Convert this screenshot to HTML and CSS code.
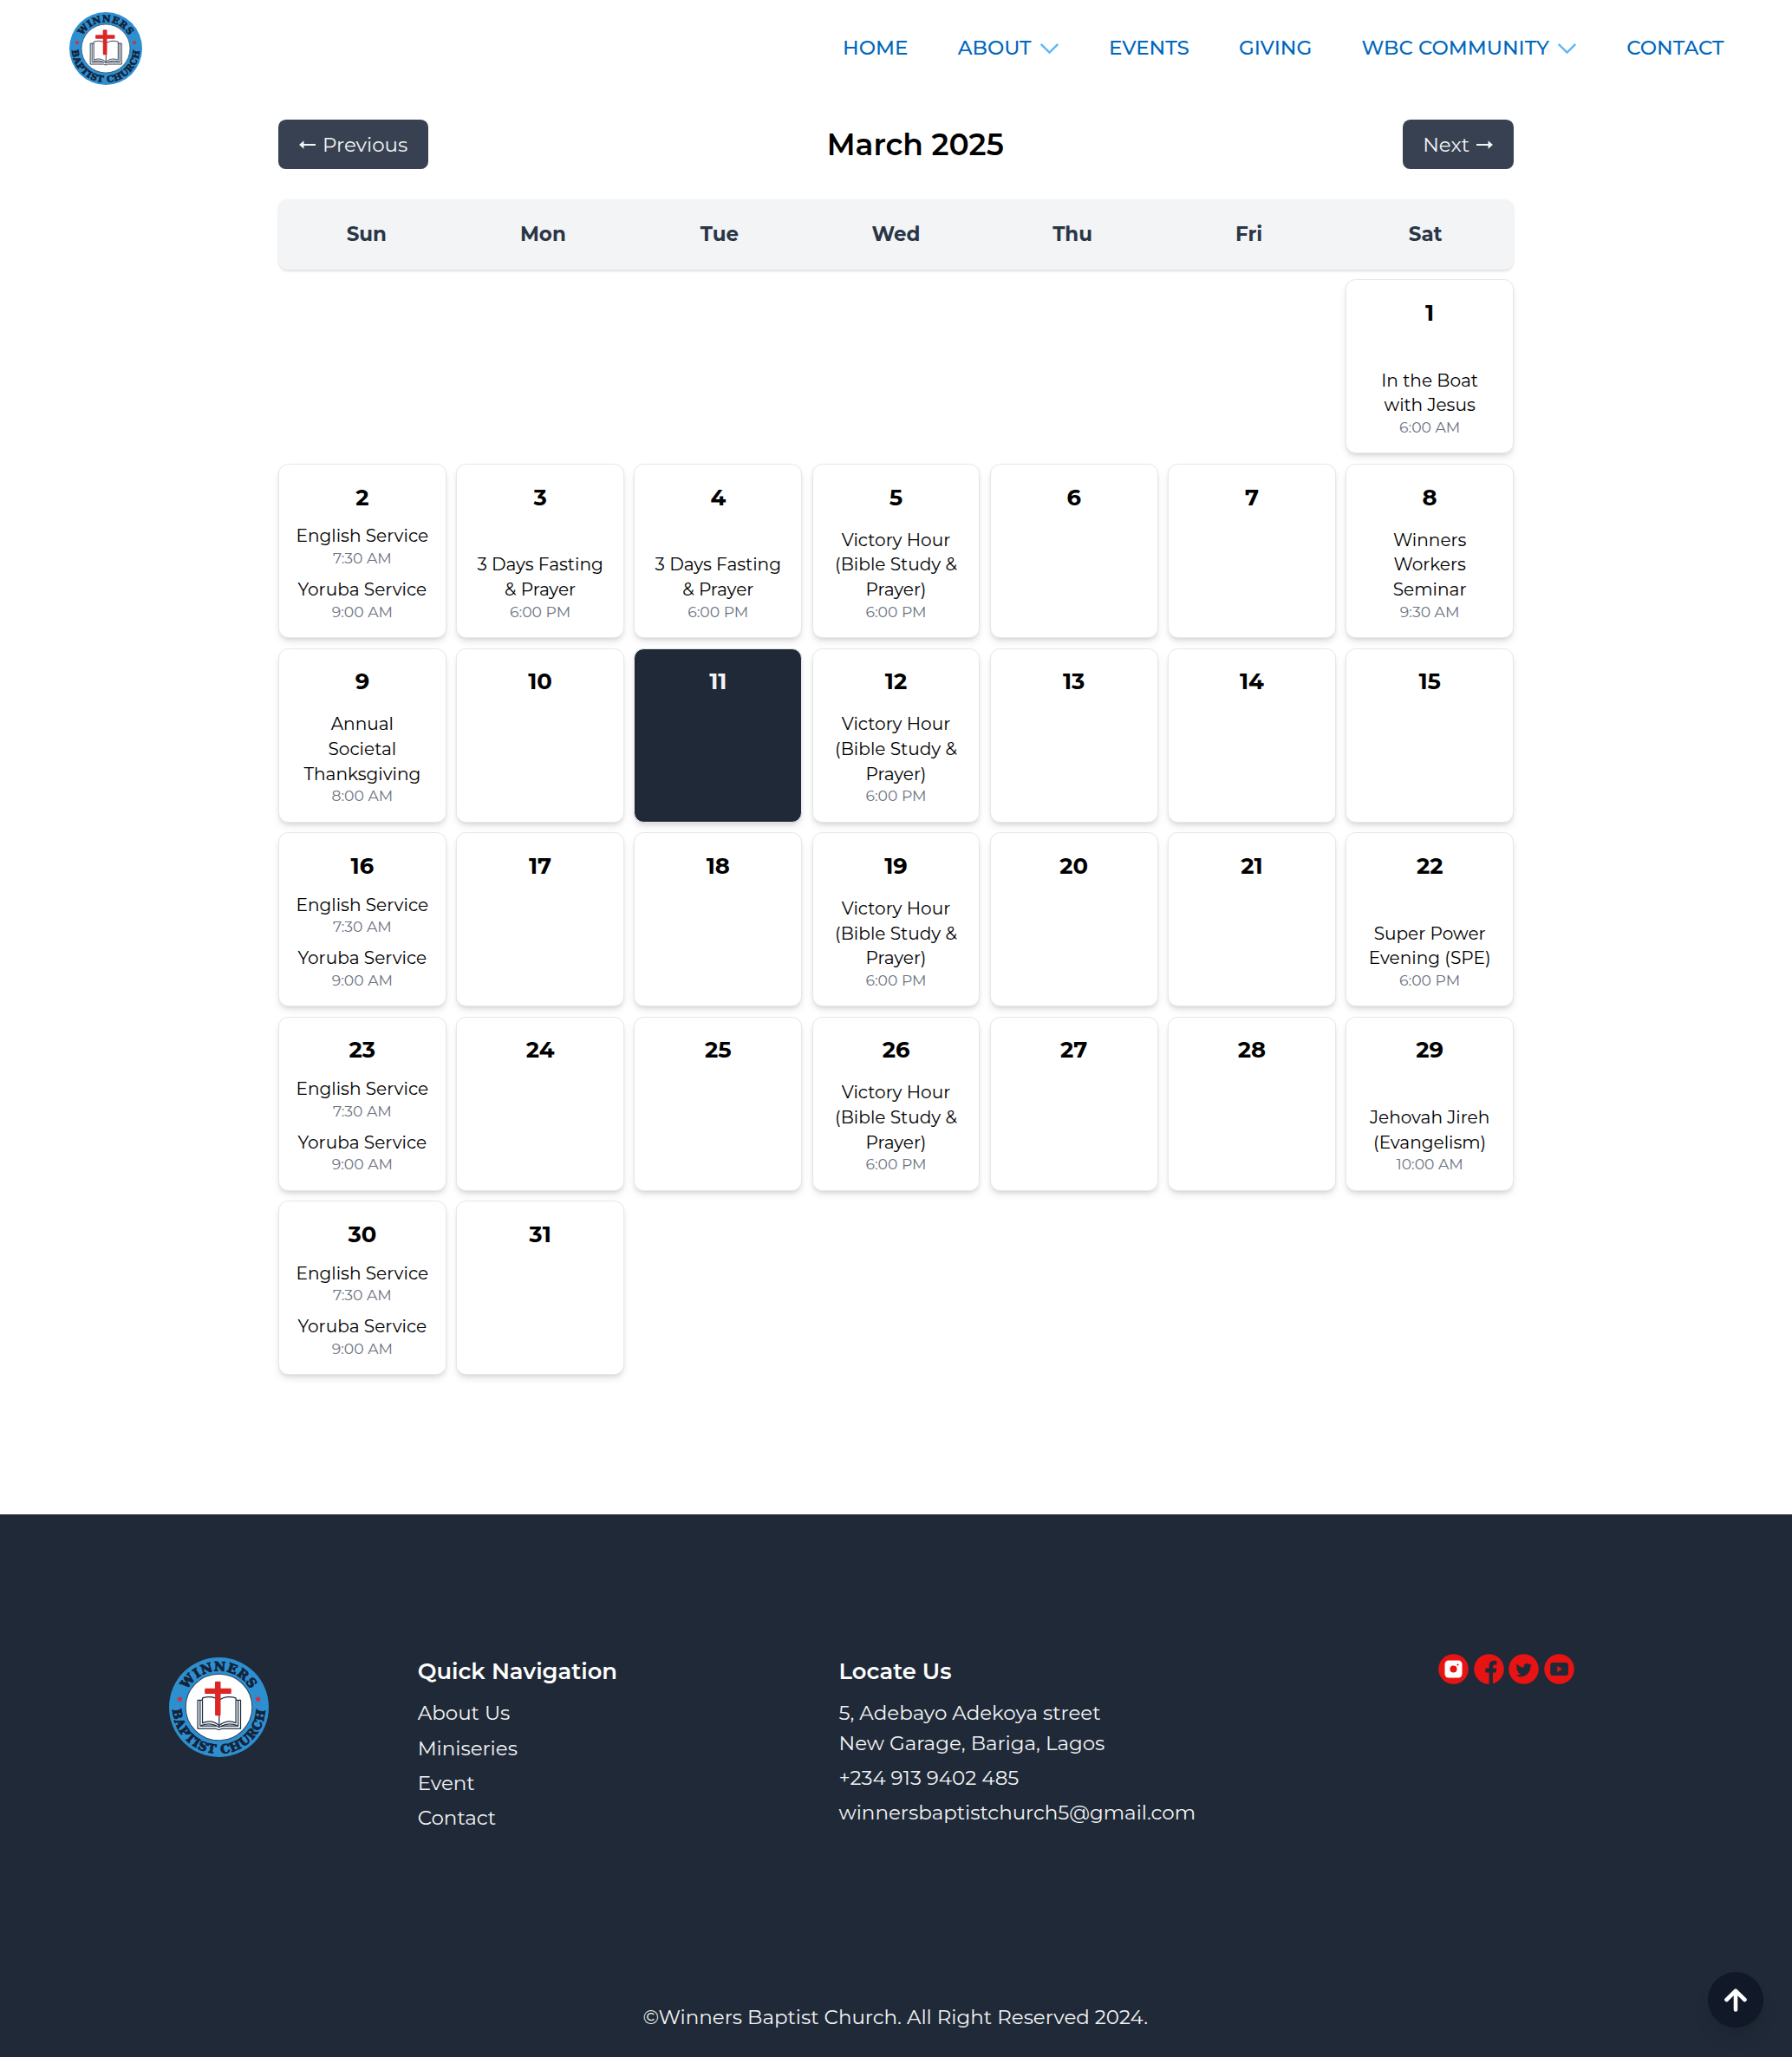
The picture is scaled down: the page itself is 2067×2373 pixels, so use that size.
FILE: index.html
```html
<!DOCTYPE html>
<html lang="en">
<head>
<meta charset="utf-8">
<title>Winners Baptist Church – Events Calendar</title>
<link rel="stylesheet" href="styles.css">
</head>
<body>
<header class="navbar">
  <a class="brand" href="#"><svg class="brand-logo" viewBox="0 0 114 116">
    <g id="seal">
      <path id="arc-top" d="M15.500 58 A41.500 41.500 0 0 1 98.500 58" fill="none"/>
      <path id="arc-bottom" d="M6.500 42 A53 53 0 1 0 107.500 42" fill="none"/>
      <circle cx="57" cy="58" r="57" fill="#2d8fd0"/>
      <circle cx="57" cy="58" r="38" fill="#fff" stroke="#27455f" stroke-width="1"/>
      <text class="seal-text seal-top"><textPath href="#arc-top" startOffset="50%">WINNERS</textPath></text>
      <text class="seal-text seal-bottom"><textPath href="#arc-bottom" startOffset="50%">BAPTIST CHURCH</textPath></text>
      <g fill="#e02a2a">
        <path d="M12.300 45l1.100 2.300 2.500.3-1.900 1.700.5 2.500-2.200-1.300-2.200 1.300.5-2.500-1.900-1.700 2.500-.3z"/>
        <path d="M101.700 45l1.100 2.300 2.500.3-1.900 1.700.5 2.500-2.200-1.300-2.200 1.300.5-2.500-1.900-1.700 2.500-.3z"/>
      </g>
      <g fill="none" stroke="#1c2c42" stroke-width="1.200" stroke-linejoin="round">
        <path d="M38 50H32.800V82.500H54c1 1.500 5 1.500 6 0H81.800V50H76.500"/>
        <path d="M35.500 50V79.500H54M79 50V79.500H60"/>
        <path fill="#fff" d="M57.300 50C52 45.500 44 45.500 38.200 47.500V76C45 73 52 74 57.300 79C62.500 74 70 73 76.400 76V47.500C70.500 45.500 62.500 45.500 57.300 50Z"/>
        <path d="M57.300 50V80M36.500 79C44 76 51 77 57.300 81C63.500 77 71 76 78 79"/>
      </g>
      <path d="M53.500 28.500h4.500q1 0 1 1V36.500H70q1.200 0 1.200 1.200v3.800q0 1.200-1.200 1.200H59V66.500q0 1.200-1.200 1.200h-4q-1.200 0-1.200-1.200V42.700H42q-1.200 0-1.200-1.200V37.700q0-1.200 1.200-1.200h10.500V29.500q0-1 1-1z" fill="#dc2626"/>
    </g>
  </svg></a>
  <nav class="menu">
    <a href="#">HOME</a>
    <a href="#">ABOUT<svg class="chevron" viewBox="0 0 20 12"><path d="M1.300 1.500L10 10.200L18.700 1.500"/></svg></a>
    <a href="#">EVENTS</a>
    <a href="#">GIVING</a>
    <a href="#">WBC COMMUNITY<svg class="chevron" viewBox="0 0 20 12"><path d="M1.300 1.500L10 10.200L18.700 1.500"/></svg></a>
    <a href="#">CONTACT</a>
  </nav>
</header>

<main class="calendar">
  <div class="toolbar">
    <button class="btn"><svg class="arrow" viewBox="0 0 19 12"><path d="M5.500 5H19v2H5.500v3.700L0 6l5.500-4.700z" fill="currentColor"/></svg>Previous</button>
    <h1 class="month">March 2025</h1>
    <button class="btn">Next<svg class="arrow" viewBox="0 0 19 12"><path d="M13.500 5H0v2h13.500v3.700L19 6l-5.500-4.700z" fill="currentColor"/></svg></button>
  </div>

  <div class="weekdays"><span>Sun</span><span>Mon</span><span>Tue</span><span>Wed</span><span>Thu</span><span>Fri</span><span>Sat</span></div>

  <div class="days">
    <article class="day first"><h2>1</h2><div class="event">In the Boat<br>with Jesus<time>6:00 AM</time></div></article>

    <article class="day"><h2>2</h2><div class="event">English Service<time>7:30 AM</time></div><div class="event">Yoruba Service<time>9:00 AM</time></div></article>
    <article class="day"><h2>3</h2><div class="event">3 Days Fasting<br>&amp; Prayer<time>6:00 PM</time></div></article>
    <article class="day"><h2>4</h2><div class="event">3 Days Fasting<br>&amp; Prayer<time>6:00 PM</time></div></article>
    <article class="day"><h2>5</h2><div class="event">Victory Hour<br>(Bible Study &amp;<br>Prayer)<time>6:00 PM</time></div></article>
    <article class="day"><h2>6</h2></article>
    <article class="day"><h2>7</h2></article>
    <article class="day"><h2>8</h2><div class="event">Winners<br>Workers<br>Seminar<time>9:30 AM</time></div></article>

    <article class="day"><h2>9</h2><div class="event">Annual<br>Societal<br>Thanksgiving<time>8:00 AM</time></div></article>
    <article class="day"><h2>10</h2></article>
    <article class="day today"><h2>11</h2></article>
    <article class="day"><h2>12</h2><div class="event">Victory Hour<br>(Bible Study &amp;<br>Prayer)<time>6:00 PM</time></div></article>
    <article class="day"><h2>13</h2></article>
    <article class="day"><h2>14</h2></article>
    <article class="day"><h2>15</h2></article>

    <article class="day"><h2>16</h2><div class="event">English Service<time>7:30 AM</time></div><div class="event">Yoruba Service<time>9:00 AM</time></div></article>
    <article class="day"><h2>17</h2></article>
    <article class="day"><h2>18</h2></article>
    <article class="day"><h2>19</h2><div class="event">Victory Hour<br>(Bible Study &amp;<br>Prayer)<time>6:00 PM</time></div></article>
    <article class="day"><h2>20</h2></article>
    <article class="day"><h2>21</h2></article>
    <article class="day"><h2>22</h2><div class="event">Super Power<br>Evening (SPE)<time>6:00 PM</time></div></article>

    <article class="day"><h2>23</h2><div class="event">English Service<time>7:30 AM</time></div><div class="event">Yoruba Service<time>9:00 AM</time></div></article>
    <article class="day"><h2>24</h2></article>
    <article class="day"><h2>25</h2></article>
    <article class="day"><h2>26</h2><div class="event">Victory Hour<br>(Bible Study &amp;<br>Prayer)<time>6:00 PM</time></div></article>
    <article class="day"><h2>27</h2></article>
    <article class="day"><h2>28</h2></article>
    <article class="day"><h2>29</h2><div class="event">Jehovah Jireh<br>(Evangelism)<time>10:00 AM</time></div></article>

    <article class="day"><h2>30</h2><div class="event">English Service<time>7:30 AM</time></div><div class="event">Yoruba Service<time>9:00 AM</time></div></article>
    <article class="day"><h2>31</h2></article>
  </div>
</main>

<footer class="footer">
  <div class="footer-grid">
    <svg class="footer-logo" viewBox="0 0 114 116"><use href="#seal"/></svg>
    <section class="footer-col">
      <h3>Quick Navigation</h3>
      <a href="#">About Us</a>
      <a href="#">Miniseries</a>
      <a href="#">Event</a>
      <a href="#">Contact</a>
    </section>
    <section class="footer-col">
      <h3>Locate Us</h3>
      <p>5, Adebayo Adekoya street<br>New Garage, Bariga, Lagos</p>
      <p>+234 913 9402 485</p>
      <p>winnersbaptistchurch5@gmail.com</p>
    </section>
    <div class="social">
      <svg viewBox="0 0 35 35"><circle cx="17.500" cy="17.500" r="17.300" fill="#e81313"/><rect x="7.500" y="7.500" width="20" height="20" rx="4.500" fill="#fff"/><circle cx="17.500" cy="17.500" r="4" fill="#e81313"/><circle cx="22.500" cy="12.500" r="1.100" fill="#e81313"/></svg>
      <svg viewBox="0 0 35 35"><circle cx="17.500" cy="17.500" r="17.300" fill="#e81313"/><path d="M17.600 35V21.500h-4.200v-5h4.200v-2.700c0-3.900 2.300-6 5.800-6 1.200 0 2.600.2 2.900.3v4.300h-2c-1.900 0-2.400 1.100-2.400 2.300v1.800h4.300l-.7 5h-3.600V35z" fill="#1f2937"/></svg>
      <svg viewBox="0 0 35 35"><circle cx="17.500" cy="17.500" r="17.300" fill="#e81313"/><path transform="translate(8.500 8.800) scale(1.160)" fill="#1f2937" d="M5.026 15c6.038 0 9.341-5.003 9.341-9.334 0-.14 0-.282-.006-.422A6.685 6.685 0 0 0 16 3.542a6.658 6.658 0 0 1-1.889.518 3.301 3.301 0 0 0 1.447-1.817 6.533 6.533 0 0 1-2.087.793A3.286 3.286 0 0 0 7.875 6.030a9.325 9.325 0 0 1-6.767-3.429 3.289 3.289 0 0 0 1.018 4.382A3.323 3.323 0 0 1 .64 6.575v.045a3.288 3.288 0 0 0 2.632 3.218 3.203 3.203 0 0 1-.865.115 3.230 3.230 0 0 1-.614-.057 3.283 3.283 0 0 0 3.067 2.277A6.588 6.588 0 0 1 .78 13.580a6.320 6.320 0 0 1-.78-.045A9.344 9.344 0 0 0 5.026 15z"/></svg>
      <svg viewBox="0 0 35 35"><circle cx="17.500" cy="17.500" r="17.300" fill="#e81313"/><rect x="7.200" y="10" width="20.800" height="15" rx="3.200" fill="#1f2937"/><path d="M15.300 14v7l5.800-3.500z" fill="#e81313"/></svg>
    </div>
  </div>
  <p class="copyright">©Winners Baptist Church. All Right Reserved 2024.</p>
</footer>

<button class="to-top" aria-label="Back to top"><svg viewBox="0 0 26 27"><path d="M13 24.500V3M2.500 13L13 2.700L23.500 13" fill="none" stroke="#fff" stroke-width="4.600" stroke-linecap="round" stroke-linejoin="round"/></svg></button>
</body>
</html>
```
FILE: styles.css
```css
* { box-sizing: border-box; margin: 0; padding: 0; }

body {
  min-height: 2373px;
  display: flex;
  flex-direction: column;
  background: #fff;
  color: #000;
  font-family: Montserrat, Inter, "Open Sans", sans-serif;
  font-size: 22.970px;
}

a { color: inherit; text-decoration: none; }
button { border: 0; font: inherit; color: inherit; }

.seal-text {
  font-family: "DejaVu Serif", serif;
  font-weight: 700;
  fill: #14233a;
  stroke: #14233a;
  stroke-width: .9px;
  text-anchor: middle;
}
.seal-top { font-size: 14.500px; letter-spacing: .8px; }
.seal-bottom { font-size: 14px; letter-spacing: .9px; }

/* Navigation */
.navbar {
  height: 111px;
  padding: 0 78.500px 0 79.500px;
  display: flex;
  align-items: center;
  justify-content: space-between;
}
.brand { display: flex; }
.brand-logo { width: 84px; height: 86px; overflow: visible; }
.menu {
  display: flex;
  align-items: center;
  gap: 57.400px;
  padding-bottom: 1px;
  color: #0067bd;
  font-weight: 500;
  line-height: 34px;
}
.menu a { display: flex; align-items: center; }
.chevron { width: 21px; height: 12.500px; margin: 3px .5px 0 10.500px; }
.chevron path { fill: none; stroke: #5cb6fb; stroke-width: 2.300; stroke-linecap: round; }

/* Calendar */
.calendar {
  width: 1425px;
  margin: 27px auto 0;
  flex: none;
}
.toolbar { display: flex; justify-content: space-between; align-items: center; }
.btn {
  height: 57.400px;
  padding: 0 23.500px;
  display: flex;
  align-items: center;
  gap: 8.500px;
  border-radius: 8.600px;
  background: #374151;
  color: #f3f4f6;
}
.arrow { width: 19px; height: 12px; }
.month { font-size: 34.450px; font-weight: 600; }
.weekdays {
  height: 81px;
  margin: 34.500px 0 11.500px;
  display: grid;
  grid-template-columns: repeat(7, 1fr);
  align-items: center;
  text-align: center;
  border-radius: 11.500px;
  background: #f3f4f6;
  color: #2a3647;
  font-weight: 700;
  box-shadow: 0 1.500px 3px rgba(0, 0, 0, .12);
}
.days {
  display: grid;
  grid-template-columns: repeat(7, 1fr);
  grid-auto-rows: 201px;
  gap: 11.600px 11.500px;
}
.day {
  padding: 17.700px 10px 18.400px;
  display: flex;
  flex-direction: column;
  border: 1.500px solid #e5e7eb;
  border-radius: 11.500px;
  background: #fff;
  text-align: center;
  box-shadow: 0 5px 8px -1px rgba(0, 0, 0, .1), 0 3px 5px -2px rgba(0, 0, 0, .1);
}
.day.first { grid-column: 7; }
.day.today { background: #1f2937; color: #f3f4f6; }
.day h2 { font-size: 25.840px; line-height: 40px; font-weight: 700; margin-bottom: auto; }
.event { font-size: 20.100px; line-height: 28.700px; }
.event + .event { margin-top: 11.200px; }
.event time { display: block; margin-top: -1.200px; color: #6b7280; font-size: 17.230px; line-height: 23px; }

/* Footer */
.footer {
  margin-top: auto;
  height: 626.500px;
  padding: 161.500px 196px 0 194.500px;
  display: flex;
  flex-direction: column;
  justify-content: space-between;
  background: #1f2937;
  color: #f3f4f6;
}
.footer-grid { display: grid; grid-template-columns: 287.200px 485.800px 1fr auto; align-items: start; }
.footer-logo { width: 115px; height: 117px; margin-top: 3px; }
.footer-col { display: flex; flex-direction: column; line-height: 34.400px; gap: 5.800px; }
.footer-col h3 { font-size: 25.840px; line-height: 40px; font-weight: 600; margin-bottom: 5.700px; color: #fff; }
.social { display: flex; gap: 5.400px; margin-right: 55.500px; }
.social svg { width: 35px; height: 35px; }
.copyright { text-align: center; line-height: 34px; margin-bottom: 29px; }

.to-top {
  position: fixed;
  right: 33px;
  bottom: 34px;
  width: 64px;
  height: 64px;
  display: flex;
  align-items: center;
  justify-content: center;
  border-radius: 50%;
  background: #111827;
  box-shadow: 0 14px 21px -4px rgba(0, 0, 0, .1), 0 6px 9px -6px rgba(0, 0, 0, .1);
}
.to-top svg { width: 26px; height: 27px; }
```
